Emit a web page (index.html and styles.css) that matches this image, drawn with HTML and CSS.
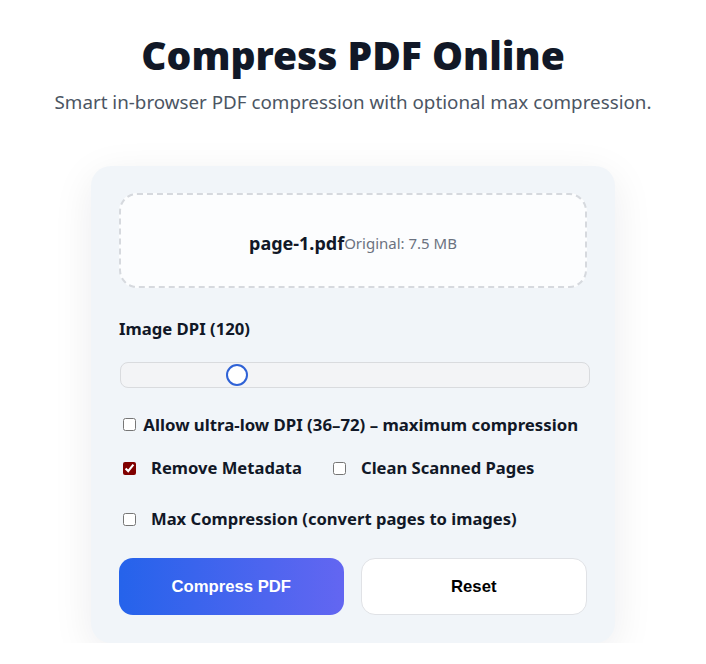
FILE: index.html
```html
<!DOCTYPE html>
<html>

<head>
    <title>Compress PDF Online</title>
    <link rel="stylesheet" href="styles.css">
</head>

<body>

    <div class="header">
        <h1 class="title">Compress PDF Online</h1>
        <p class="subtitle">Smart in-browser PDF compression with optional max compression.</p>
    </div>

    <div class="card">
        <!-- Зона з вибраним файлом -->
        <div class="dropzone">
            <span class="file-name">page-1.pdf</span><span class="file-size">Original: 7.5 MB</span>
        </div>

        <label class="dpi-label" for="dpi">Image DPI (120)</label>
        <input class="dpi-range" type="range" id="dpi" min="36" max="392" value="120">

        <label class="ultra-low">
            <input type="checkbox" id="ultraLow"> Allow ultra-low DPI (36–72) – maximum compression
        </label>

        <div class="options-row">
            <label class="option"><input type="checkbox" id="removeMeta" checked>Remove Metadata</label>
            <label class="option"><input type="checkbox" id="cleanScan">Clean Scanned Pages</label>
        </div>

        <div class="options-row last">
            <label class="option"><input type="checkbox" id="maxCompression">Max Compression (convert pages to images)</label>
        </div>

        <div class="actions">
            <button class="btn-primary" id="compress">Compress PDF</button>
            <button class="btn-secondary" id="reset">Reset</button>
        </div>
    </div>

</body>

</html>
```

FILE: styles.css
```css
body { /* Загальний стиль сторінки */
    margin: 0;
    background: #ffffff;
    font-family: "Noto Sans", "Open Sans", sans-serif;
    color: #111827;
}

.header { /* Заголовок та підзаголовок */
    text-align: center;
    padding-top: 32px;
}

.title {
    margin: 0;
    font-size: 39px;
    font-weight: 900;
    line-height: 46px;
    color: #111827;
}

.subtitle {
    margin: 11px 0 0;
    font-size: 18.8px;
    line-height: 27px;
    color: #4b5563;
}

.card { /* Основна картка з налаштуваннями */
    box-sizing: border-box;
    width: 524px;
    margin: 50px auto 0;
    padding: 27px 28px 28px;
    background: #f1f5f9;
    border-radius: 20px;
    box-shadow: 0 10px 40px rgba(15, 23, 42, 0.08);
}

.dropzone { /* Зона файлу з пунктирною рамкою */
    box-sizing: border-box;
    height: 95px;
    padding-top: 4px;
    display: flex;
    align-items: center;
    justify-content: center;
    background: #fcfdfe;
    border: 2px dashed #d6d9de;
    border-radius: 18px;
}

.file-name {
    font-size: 18px;
    font-weight: 700;
    color: #111827;
}

.file-size {
    font-size: 15px;
    color: #6b7280;
}

.dpi-label {
    display: block;
    margin-top: 30px;
    font-size: 16.7px;
    font-weight: 700;
    line-height: 22px;
}

.dpi-range { /* Повзунок DPI */
    -webkit-appearance: none;
    appearance: none;
    display: block;
    box-sizing: border-box;
    width: 470px;
    height: 26px;
    margin: 22px 0 0 1px;
    background: #f3f4f6;
    border: 1px solid #d9dbde;
    border-radius: 8px;
}

.dpi-range::-webkit-slider-thumb {
    -webkit-appearance: none;
    width: 22px;
    height: 22px;
    border-radius: 50%;
    background: #ffffff;
    border: 2px solid #2f62d6;
    box-sizing: border-box;
}

.ultra-low { /* Чекбокс ультранизького DPI */
    display: block;
    margin-top: 26px;
    font-size: 16.8px;
    font-weight: 700;
    line-height: 22px;
}

input[type="checkbox"] {
    accent-color: #800000;
}

.options-row { /* Рядок з опціями */
    display: flex;
    gap: 27px;
    margin-top: 21px;
}

.options-row.last {
    margin-top: 29px;
}

.option {
    display: inline-flex;
    align-items: center;
    gap: 12px;
    font-size: 16.6px;
    font-weight: 700;
    line-height: 22px;
}

.actions { /* Кнопки дій */
    display: flex;
    gap: 17px;
    margin-top: 28px;
}

.actions button {
    flex: 1;
    height: 57px;
    border-radius: 14px;
    font-family: "Liberation Sans", Arial, sans-serif;
    font-size: 16.7px;
    font-weight: 700;
    cursor: pointer;
}

.btn-primary {
    border: none;
    color: #ffffff;
    background: linear-gradient(90deg, #2563eb, #6366f1);
}

.btn-secondary {
    background: #ffffff;
    color: #000000;
    border: 1px solid #e0e2e6;
}
```
